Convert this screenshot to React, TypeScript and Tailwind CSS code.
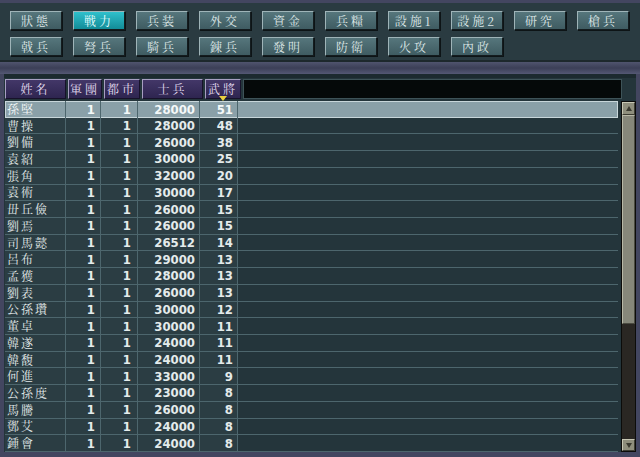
import React from 'react';

const row1 = ['狀態', '戦力', '兵装', '外交', '資金', '兵糧', '設施1', '設施2', '研究', '槍兵'];
const row2 = ['戟兵', '弩兵', '騎兵', '錬兵', '發明', '防衛', '火攻', '內政'];

const officers: [string, number, number, number, number][] = [
  ['孫堅', 1, 1, 28000, 51],
  ['曹操', 1, 1, 28000, 48],
  ['劉備', 1, 1, 26000, 38],
  ['袁紹', 1, 1, 30000, 25],
  ['張角', 1, 1, 32000, 20],
  ['袁術', 1, 1, 30000, 17],
  ['毌丘儉', 1, 1, 26000, 15],
  ['劉焉', 1, 1, 26000, 15],
  ['司馬懿', 1, 1, 26512, 14],
  ['呂布', 1, 1, 29000, 13],
  ['孟獲', 1, 1, 28000, 13],
  ['劉表', 1, 1, 26000, 13],
  ['公孫瓚', 1, 1, 30000, 12],
  ['董卓', 1, 1, 30000, 11],
  ['韓遂', 1, 1, 24000, 11],
  ['韓馥', 1, 1, 24000, 11],
  ['何進', 1, 1, 33000, 9],
  ['公孫度', 1, 1, 23000, 8],
  ['馬騰', 1, 1, 26000, 8],
  ['鄧艾', 1, 1, 24000, 8],
  ['鍾會', 1, 1, 24000, 8],
];

const cjk = { fontFamily: '"Noto Serif CJK JP", "Noto Sans CJK JP", serif' };
const num = { fontFamily: '"DejaVu Sans Condensed", "Liberation Sans Narrow", sans-serif' };

function TabButton({ label, active }: { label: string; active?: boolean }) {
  return (
    <div
      style={cjk}
      className={
        'w-[52px] h-[19px] flex items-center justify-center overflow-hidden text-[12px] leading-none tracking-[3px] border border-t-[#9fb4b8] border-l-[#9fb4b8] border-r-[#141c1f] border-b-[#141c1f] shadow-[1px_1px_0_#0d1416] ' +
        (active
          ? 'bg-gradient-to-b from-[#2fc0cc] to-[#128c98] text-[#e8ffff]'
          : 'bg-gradient-to-b from-[#56767c] to-[#3f5c62] text-[#dfe8e8]')
      }
    >
      {label}
    </div>
  );
}

function HeadCell({ label, w }: { label: string; w: string }) {
  return (
    <div
      style={cjk}
      className={
        w +
        ' h-[20px] flex items-center justify-center overflow-hidden leading-none bg-gradient-to-b from-[#433768] to-[#2e2550] text-[#e2dcf0] text-[12px] tracking-[3px] border border-t-[#a79fc2] border-l-[#a79fc2] border-r-[#17122a] border-b-[#17122a]'
      }
    >
      {label}
    </div>
  );
}

const cellBase = 'flex items-center overflow-hidden border-r border-[#4d666d] ';

export default function App() {
  return (
    <div className="w-[640px] h-[457px] bg-[#434660] flex flex-col overflow-hidden">
      {/* command panel */}
      <div className="mt-[3px] h-[59px] bg-[#2a3b41] flex flex-col gap-[7px] pt-[8px] pl-[10px] border-b-2 border-[#1d282c]">
        <div className="flex gap-[11px]">
          {row1.map((l) => (
            <TabButton key={l} label={l} active={l === '戦力'} />
          ))}
        </div>
        <div className="flex gap-[11px]">
          {row2.map((l) => (
            <TabButton key={l} label={l} />
          ))}
        </div>
      </div>

      {/* stone strip */}
      <div className="h-[12px] bg-gradient-to-b from-[#50546e] via-[#3c3f57] to-[#545874]" />

      {/* list panel */}
      <div className="mx-[4px] h-[378px] bg-[#24353b] border-t-4 border-[#1c2a2f] flex flex-col">
        <div className="flex gap-[2px] pl-[1px] pt-[1px] h-[22px] relative">
          <HeadCell label="姓名" w="w-[61px]" />
          <HeadCell label="軍團" w="w-[34px]" />
          <HeadCell label="都市" w="w-[36px]" />
          <HeadCell label="士兵" w="w-[61px]" />
          <div className="relative">
            <HeadCell label="武將" w="w-[36px]" />
            <div className="absolute left-[14px] top-[17px] w-0 h-0 border-l-[4px] border-r-[4px] border-t-[5px] border-l-transparent border-r-transparent border-t-[#e8d040]" />
          </div>
          <div className="w-[379px] h-[20px] bg-[#050909] border border-[#3e5358]" />
        </div>

        <div className="flex flex-1 pt-[1px]">
          <div className="w-[613px] h-[351px] grid grid-rows-[repeat(21,1fr)] ml-[1px]">
            {officers.map(([name, g, c, s, w], i) => {
              const bg = i === 0 ? '' : 'bg-[#2b3d43]';
              return (
                <div
                  key={name}
                  className={
                    'flex items-stretch overflow-hidden leading-none ' +
                    (i === 0
                      ? 'bg-[#8aa0a8] shadow-[inset_0_0_0_1px_#c8d6da] text-[#f4f8f8]'
                      : 'border-b border-[#4d666d] text-[#e4ebeb]')
                  }
                >
                  <div style={cjk} className={cellBase + 'w-[61px] pl-[2px] text-[12px] tracking-[2px] ' + bg}>
                    {name}
                  </div>
                  <div style={num} className={cellBase + 'w-[35px] justify-end pr-[5px] text-[13px] font-bold ' + bg}>
                    {g}
                  </div>
                  <div style={num} className={cellBase + 'w-[37px] justify-end pr-[6px] text-[13px] font-bold ' + bg}>
                    {c}
                  </div>
                  <div style={num} className={cellBase + 'w-[62px] justify-end pr-[4px] text-[13px] font-bold ' + bg}>
                    {s}
                  </div>
                  <div style={num} className={cellBase + 'w-[38px] justify-end pr-[4px] text-[13px] font-bold ' + bg}>
                    {w}
                  </div>
                  <div className="flex-1" />
                </div>
              );
            })}
          </div>

          {/* scrollbar */}
          <div className="ml-[3px] w-[15px] h-[351px] flex flex-col bg-[#1a1815] border border-[#0c0c0a]">
            <div className="h-[13px] bg-[#8e8e7c] border border-t-[#c8c8b4] border-l-[#c8c8b4] border-r-[#3c3c32] border-b-[#3c3c32] flex items-center justify-center">
              <div className="w-0 h-0 border-l-[3px] border-r-[3px] border-b-[5px] border-l-transparent border-r-transparent border-b-[#3a3a30]" />
            </div>
            <div className="h-[209px] bg-[#86877a] border border-t-[#b8b8a6] border-l-[#b8b8a6] border-r-[#4a4a40] border-b-[#4a4a40]" />
            <div className="flex-1 bg-[#2a2723]" />
            <div className="h-[12px] bg-[#8e8e7c] border border-t-[#c8c8b4] border-l-[#c8c8b4] border-r-[#3c3c32] border-b-[#3c3c32] flex items-center justify-center">
              <div className="w-0 h-0 border-l-[3px] border-r-[3px] border-t-[5px] border-l-transparent border-r-transparent border-t-[#3a3a30]" />
            </div>
          </div>
        </div>
      </div>
    </div>
  );
}
